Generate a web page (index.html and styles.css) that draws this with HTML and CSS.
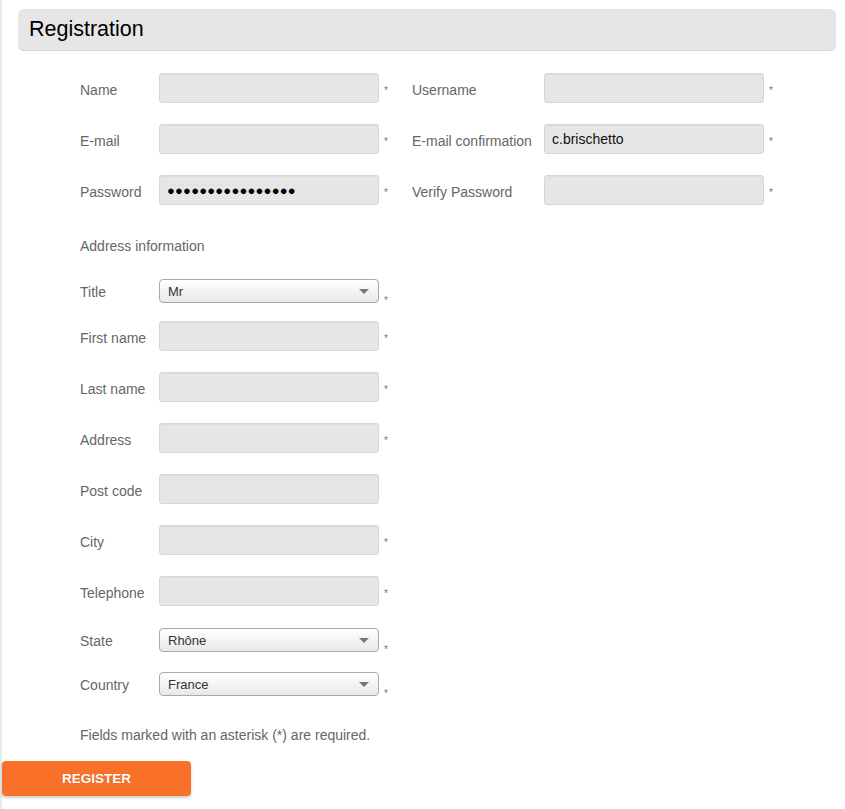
FILE: index.html
```html
<!DOCTYPE html>
<html>
<head>
<meta charset="utf-8">
<link rel="stylesheet" href="styles.css">
</head>
<body>
<div class="page">
  <div class="header"><h1>Registration</h1></div>
  <div class="form">
    <div class="row">
      <div class="field"><label class="lbl">Name</label><input class="inp" type="text"><span class="req">*</span></div>
      <div class="field right"><label class="lbl">Username</label><input class="inp" type="text"><span class="req">*</span></div>
    </div>
    <div class="row">
      <div class="field"><label class="lbl">E-mail</label><input class="inp" type="text"><span class="req">*</span></div>
      <div class="field right"><label class="lbl">E-mail confirmation</label><input class="inp" type="text" value="c.brischetto"><span class="req">*</span></div>
    </div>
    <div class="row">
      <div class="field"><label class="lbl">Password</label><input class="inp pwd" type="text" value="●●●●●●●●●●●●●●●●"><span class="req">*</span></div>
      <div class="field right"><label class="lbl">Verify Password</label><input class="inp" type="text"><span class="req">*</span></div>
    </div>

    <div class="section">Address information</div>

    <div class="row sel-row first-sel">
      <div class="field"><label class="lbl">Title</label><div class="sel">Mr<span class="arrow"></span></div><span class="req low">*</span></div>
    </div>
    <div class="row after-sel">
      <div class="field"><label class="lbl">First name</label><input class="inp" type="text"><span class="req">*</span></div>
    </div>
    <div class="row">
      <div class="field"><label class="lbl">Last name</label><input class="inp" type="text"><span class="req">*</span></div>
    </div>
    <div class="row">
      <div class="field"><label class="lbl">Address</label><input class="inp" type="text"><span class="req">*</span></div>
    </div>
    <div class="row">
      <div class="field"><label class="lbl">Post code</label><input class="inp" type="text"><span class="req"></span></div>
    </div>
    <div class="row">
      <div class="field"><label class="lbl">City</label><input class="inp" type="text"><span class="req">*</span></div>
    </div>
    <div class="row">
      <div class="field"><label class="lbl">Telephone</label><input class="inp" type="text"><span class="req">*</span></div>
    </div>
    <div class="row sel-row state">
      <div class="field"><label class="lbl">State</label><div class="sel">Rhône<span class="arrow"></span></div><span class="req low">*</span></div>
    </div>
    <div class="row sel-row country">
      <div class="field"><label class="lbl">Country</label><div class="sel">France<span class="arrow"></span></div><span class="req low">*</span></div>
    </div>

    <p class="note">Fields marked with an asterisk (*) are required.</p>
  </div>
  <button class="btn" type="button">REGISTER</button>
</div>
</body>
</html>
```

FILE: styles.css
```css
html, body {
  margin: 0;
  padding: 0;
  background: #ffffff;
}
body {
  font-family: "Liberation Sans", Arial, sans-serif;
}
.page {
  border-left: 2px solid #e6e9f0;
  min-height: 809px;
  box-sizing: border-box;
  padding-top: 9px;
}
.header {
  margin: 0 9px 0 16px;
  height: 42px;
  background: #e6e6e6;
  border-radius: 6px;
  border-bottom: 1px solid #d4d4d4;
  box-sizing: border-box;
  display: flex;
  align-items: center;
  padding-left: 11px;
}
.header h1 {
  margin: 0;
  font-size: 21.5px;
  font-weight: normal;
  color: #000;
  padding-bottom: 0;
}
.form {
  padding-left: 78px;
  padding-top: 22px;
}
.row {
  display: flex;
  height: 30px;
  margin-bottom: 21px;
}
.field {
  display: flex;
  align-items: center;
  width: 332px;
}
.field.right {
  width: auto;
}
.lbl {
  width: 79px;
  flex: none;
  font-size: 14px;
  color: #666;
  padding-top: 3px;
}
.right .lbl {
  width: 132px;
}
.inp {
  width: 220px;
  height: 30px;
  box-sizing: border-box;
  background: #e6e6e6;
  border: 1px solid #d6d6d6;
  border-radius: 3px;
  box-shadow: inset 0 1px 1px rgba(0,0,0,0.04);
  padding: 0 7px;
  font-family: "Liberation Sans", Arial, sans-serif;
  font-size: 14px;
  color: #111;
  outline: none;
  margin: 0;
}
.inp.pwd {
  font-size: 13px;
  letter-spacing: 0.2px;
  color: #000;
  padding-left: 7px;
}
.req {
  margin-left: 5px;
  font-size: 10px;
  color: #8a7070;
  width: 28px;
  padding-top: 4px;
}
.req.low {
  align-self: flex-end;
  padding-top: 0;
  margin-bottom: -3px;
}
.section {
  font-size: 14px;
  color: #666;
  margin-top: 33px;
  height: 16px;
  line-height: 16px;
  margin-bottom: 25px;
}
.sel-row {
  height: 24px;
}
.first-sel {
  margin-bottom: 18px;
}
.sel-row .lbl {
  padding-top: 1px;
}
.sel {
  position: relative;
  width: 220px;
  height: 24px;
  box-sizing: border-box;
  border: 1px solid #a9a9a9;
  border-radius: 4px;
  background: linear-gradient(#ffffff 0%, #f4f4f4 50%, #e8e8e8 100%);
  font-size: 13px;
  color: #333;
  padding-left: 8px;
  line-height: 23px;
}
.arrow {
  position: absolute;
  right: 9px;
  top: 9px;
  width: 0;
  height: 0;
  border-left: 5px solid transparent;
  border-right: 5px solid transparent;
  border-top: 5px solid #777;
}
.row.state {
  margin-top: 22px;
  margin-bottom: 20px;
}
.row.country {
  margin-bottom: 0;
}
.note {
  margin: 31px 0 0 0;
  font-size: 14px;
  line-height: 17px;
  color: #666;
}
.btn {
  display: block;
  margin-top: 17px;
  width: 189px;
  height: 35px;
  border: none;
  border-radius: 4px;
  background: #f97028;
  color: #fff;
  font-family: "Liberation Sans", Arial, sans-serif;
  font-weight: bold;
  font-size: 13.5px;
  box-shadow: 0 2px 3px rgba(0,0,0,0.2);
  text-shadow: 0 0 1px rgba(0,0,0,0.2);
  padding: 0;
  cursor: pointer;
}
```
